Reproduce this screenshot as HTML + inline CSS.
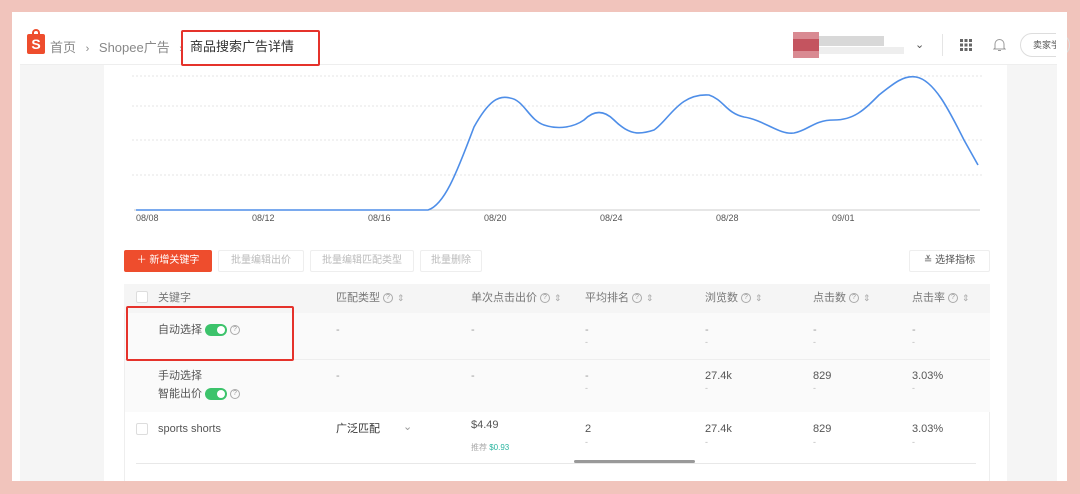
<!DOCTYPE html>
<html><head><meta charset="utf-8"><style>
*{margin:0;padding:0;box-sizing:border-box}
body{width:1080px;height:494px;background:#f1c4bc;position:relative;overflow:hidden;font-family:"Liberation Sans","Noto Sans CJK SC",sans-serif;color:#333}
.a{position:absolute}
.t{font-size:11px;color:#555;white-space:nowrap;line-height:14px}
.d{font-size:9px;color:#bbb}
.q{display:inline-block;width:10px;height:10px;border:1px solid #aaa;border-radius:50%;font-size:7px;line-height:8px;text-align:center;color:#999;vertical-align:middle;margin-left:3px}
.tg{display:inline-block;width:22px;height:12px;border-radius:6px;background:#3cc36b;position:relative;vertical-align:middle;margin-left:3px}
.tg:after{content:"";position:absolute;right:2px;top:2px;width:8px;height:8px;border-radius:50%;background:#fff}
.btn{position:absolute;top:250px;height:22px;border:1px solid #eee;border-radius:2px;font-size:10px;color:#bbb;line-height:20px;text-align:center;background:#fff;white-space:nowrap}
.cb{position:absolute;width:12px;height:12px;border:1px solid #ddd;background:#fff;border-radius:2px}
.s{color:#aaa;font-size:9px;margin-left:4px}
</style></head><body>
<div class="a" style="left:12px;top:12px;width:1055px;height:469px;background:#fff"></div>
<div class="a" style="left:20px;top:65px;width:84px;height:416px;background:#f5f5f5"></div>
<div class="a" style="left:1007px;top:65px;width:50px;height:416px;background:#f5f5f5"></div>
<div class="a" style="left:20px;top:64px;width:1037px;height:1px;background:#eee"></div>
<div class="a" style="left:27px;top:34px;width:18px;height:20px;background:#ee4d2d;border-radius:2px;color:#fff;font-weight:bold;font-size:14px;text-align:center;line-height:21px">S</div>
<div class="a" style="left:32px;top:29px;width:8px;height:7px;border:2px solid #ee4d2d;border-bottom:none;border-radius:4px 4px 0 0"></div>
<div class="a" style="left:50px;top:37px;font-size:13px;color:#888;white-space:nowrap">首页 <span style="margin:0 6px;font-size:11px">›</span> Shopee广告 <span style="margin:0 6px;font-size:11px">›</span></div>
<div class="a" style="left:190px;top:36px;font-size:13px;color:#333">商品搜索广告详情</div>
<div class="a" style="left:181px;top:30px;width:139px;height:36px;border:2px solid #e5322b;border-radius:2px"></div>
<div class="a" style="left:793px;top:32px;width:26px;height:26px;background:#d98a92"></div>
<div class="a" style="left:793px;top:39px;width:26px;height:12px;background:#c4545f"></div>
<div class="a" style="left:819px;top:36px;width:65px;height:10px;background:#d8d8d8"></div>
<div class="a" style="left:819px;top:47px;width:85px;height:7px;background:#eee"></div>
<div class="a" style="left:915px;top:38px;font-size:11px;color:#555">⌄</div>
<div class="a" style="left:942px;top:34px;width:1px;height:22px;background:#e5e5e5"></div>
<svg class="a" style="left:960px;top:39px" width="12" height="12"><g fill="#666"><rect x="0" y="0" width="3" height="3"/><rect x="4.5" y="0" width="3" height="3"/><rect x="9" y="0" width="3" height="3"/><rect x="0" y="4.5" width="3" height="3"/><rect x="4.5" y="4.5" width="3" height="3"/><rect x="9" y="4.5" width="3" height="3"/><rect x="0" y="9" width="3" height="3"/><rect x="4.5" y="9" width="3" height="3"/><rect x="9" y="9" width="3" height="3"/></g></svg>
<svg class="a" style="left:993px;top:38px" width="13" height="14"><path d="M2 10 V6 a4.5 4.5 0 0 1 9 0 V10 L12 11 H1 Z M5 12.5 h3" fill="none" stroke="#999" stroke-width="1"/></svg>
<div class="a" style="left:1020px;top:33px;width:50px;height:24px;border:1px solid #ddd;border-radius:12px;font-size:9px;line-height:22px;padding-left:12px;color:#555;white-space:nowrap;overflow:hidden">卖家学</div>
<div class="a" style="left:1056px;top:28px;width:11px;height:34px;background:#fff"></div>
<svg class="a" style="left:104px;top:65px" width="903" height="170">
<g stroke="#e6e6e6" stroke-dasharray="2,2"><line x1="28" y1="11" x2="880" y2="11"/><line x1="28" y1="41" x2="880" y2="41"/><line x1="28" y1="75" x2="880" y2="75"/><line x1="28" y1="110" x2="880" y2="110"/></g>
<line x1="30" y1="145" x2="876" y2="145" stroke="#ccc"/>
<path d="M32 145 L324 145 C340 140 352 110 370 62 C385 35 395 30 406 33 C420 35 425 55 440 60 C455 65 470 62 480 55 C490 45 500 45 510 55 C525 70 535 70 550 65 C565 55 575 28 605 30 C620 35 622 48 640 52 C660 55 675 70 690 68 C705 65 710 55 730 55 C750 55 760 45 775 30 C790 18 800 10 812 12 C830 15 845 45 860 75 L874 100" fill="none" stroke="#4e8ee8" stroke-width="1.6"/>
<g font-size="9" fill="#555" font-family="Liberation Sans"><text x="32" y="156">08/08</text><text x="148" y="156">08/12</text><text x="264" y="156">08/16</text><text x="380" y="156">08/20</text><text x="496" y="156">08/24</text><text x="612" y="156">08/28</text><text x="728" y="156">09/01</text></g>
</svg>
<div class="btn" style="left:124px;width:88px;background:#ee4d2d;border-color:#ee4d2d;color:#fff">＋ 新增关键字</div>
<div class="btn" style="left:218px;width:86px">批量编辑出价</div>
<div class="btn" style="left:310px;width:104px">批量编辑匹配类型</div>
<div class="btn" style="left:420px;width:62px">批量删除</div>
<div class="btn" style="left:909px;width:81px;color:#555">≚ 选择指标</div>
<div class="a" style="left:124px;top:284px;width:866px;height:200px;border-left:1px solid #eee;border-right:1px solid #eee"></div>
<div class="a" style="left:124px;top:284px;width:866px;height:29px;background:#f5f5f5"></div>
<div class="a" style="left:125px;top:313px;width:865px;height:99px;background:#fafafa"></div>
<div class="a" style="left:125px;top:359px;width:865px;height:1px;background:#eee"></div>
<div class="a" style="left:136px;top:463px;width:840px;height:1px;background:#e8e8e8"></div>
<div class="a" style="left:574px;top:460px;width:121px;height:3px;background:#999;border-radius:2px"></div>
<div class="cb" style="left:136px;top:291px"></div>
<div class="cb" style="left:136px;top:423px"></div>
<div class="a t" style="left:158px;top:291px;color:#777">关键字</div>
<div class="a t" style="left:336px;top:291px;color:#777">匹配类型<span class="q">?</span><span class="s">⇕</span></div>
<div class="a t" style="left:471px;top:291px;color:#777">单次点击出价<span class="q">?</span><span class="s">⇕</span></div>
<div class="a t" style="left:585px;top:291px;color:#777">平均排名<span class="q">?</span><span class="s">⇕</span></div>
<div class="a t" style="left:705px;top:291px;color:#777">浏览数<span class="q">?</span><span class="s">⇕</span></div>
<div class="a t" style="left:813px;top:291px;color:#777">点击数<span class="q">?</span><span class="s">⇕</span></div>
<div class="a t" style="left:912px;top:291px;color:#777">点击率<span class="q">?</span><span class="s">⇕</span></div>
<div class="a t" style="left:158px;top:323px">自动选择<span class="tg"></span><span class="q">?</span></div>
<div class="a" style="left:126px;top:306px;width:168px;height:55px;border:2px solid #e5322b;border-radius:2px"></div>
<div class="a t" style="left:158px;top:369px">手动选择</div>
<div class="a t" style="left:158px;top:387px">智能出价<span class="tg"></span><span class="q">?</span></div>
<div class="a t" style="left:158px;top:422px">sports shorts</div>
<div class="a t" style="left:336px;top:422px;color:#333">广泛匹配</div>
<div class="a t" style="left:403px;top:420px;color:#999">⌄</div>
<div class="a t" style="left:471px;top:418px">$4.49</div>
<div class="a" style="left:471px;top:442px;font-size:8px;color:#aaa">推荐 <span style="color:#2bb5a0">$0.93</span></div>
<div class="a t" style="left:585px;top:422px">2</div>
<div class="a t" style="left:336px;top:323px;color:#999">-</div><div class="a t" style="left:471px;top:323px;color:#999">-</div>
<div class="a t" style="left:585px;top:323px;color:#999">-</div><div class="a t" style="left:705px;top:323px;color:#999">-</div>
<div class="a t" style="left:813px;top:323px;color:#999">-</div><div class="a t" style="left:912px;top:323px;color:#999">-</div>
<div class="a t" style="left:336px;top:369px;color:#999">-</div><div class="a t" style="left:471px;top:369px;color:#999">-</div>
<div class="a t" style="left:585px;top:369px;color:#999">-</div>
<div class="a t" style="left:705px;top:369px">27.4k</div><div class="a t" style="left:813px;top:369px">829</div><div class="a t" style="left:912px;top:369px">3.03%</div>
<div class="a t" style="left:705px;top:422px">27.4k</div><div class="a t" style="left:813px;top:422px">829</div><div class="a t" style="left:912px;top:422px">3.03%</div>
<div class="a d" style="left:585px;top:337px">-</div><div class="a d" style="left:705px;top:337px">-</div><div class="a d" style="left:813px;top:337px">-</div><div class="a d" style="left:912px;top:337px">-</div>
<div class="a d" style="left:585px;top:383px">-</div><div class="a d" style="left:705px;top:383px">-</div><div class="a d" style="left:813px;top:383px">-</div><div class="a d" style="left:912px;top:383px">-</div>
<div class="a d" style="left:585px;top:437px">-</div><div class="a d" style="left:705px;top:437px">-</div><div class="a d" style="left:813px;top:437px">-</div><div class="a d" style="left:912px;top:437px">-</div>
<div class="a" style="left:0;top:481px;width:1080px;height:13px;background:#f1c4bc"></div>
</body></html>
